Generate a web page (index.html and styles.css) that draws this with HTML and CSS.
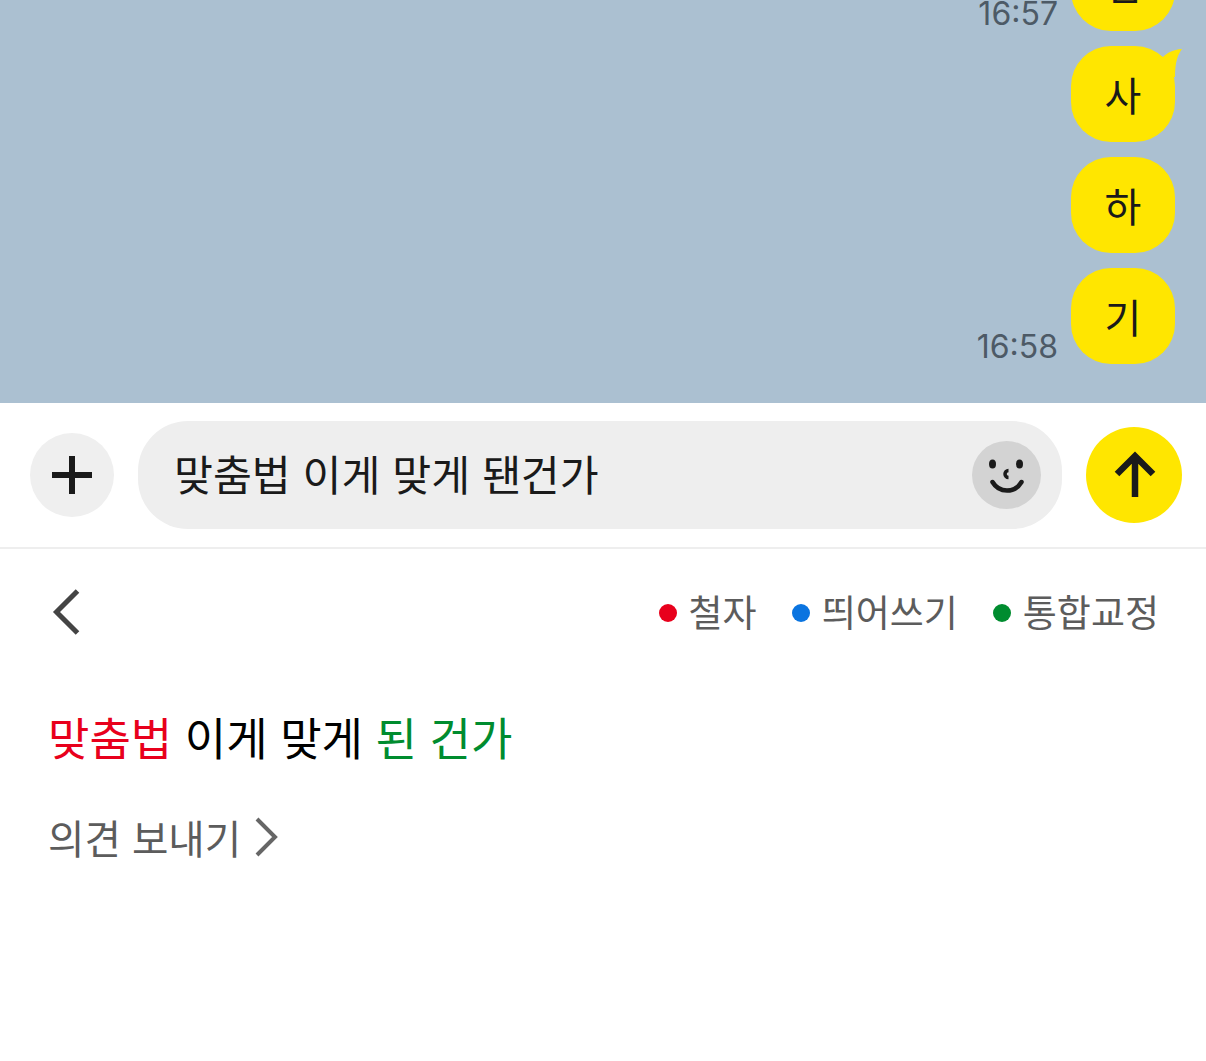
FILE: index.html
```html
<!DOCTYPE html>
<html lang="ko">
<head>
<meta charset="utf-8">
<title>맞춤법</title>
<link rel="stylesheet" href="styles.css">
</head>
<body>
<main class="screen">
  <section class="chat">
    <div class="msg">
      <time class="time">16:57</time>
      <div class="bubble">냄</div>
    </div>
    <div class="msg">
      <div class="bubble tailed">사
        <svg class="tail" width="24" height="36" viewBox="0 0 24 36"><path d="M0 8L5 11C9 7 15 3.500 24 3C20 8 17 16 17 31L0 31Z"/></svg>
      </div>
    </div>
    <div class="msg"><div class="bubble">하</div></div>
    <div class="msg">
      <time class="time">16:58</time>
      <div class="bubble">기</div>
    </div>
  </section>

  <section class="composer">
    <button class="plus" aria-label="추가">
      <svg width="42" height="42" viewBox="0 0 42 42"><path d="M21 2V40M1 21H41" fill="none" stroke="#1a1a1a" stroke-width="6"/></svg>
    </button>
    <div class="field">
      <span class="field-text">맞춤법 이게 맞게 됀건가</span>
      <span class="emoji">
        <svg width="40" height="36" viewBox="0 0 40 36"><ellipse cx="5.500" cy="7" rx="3.500" ry="4.500" fill="#1a1a1a"/><ellipse cx="32.500" cy="7" rx="3.500" ry="4.500" fill="#1a1a1a"/><path d="M21.500 13.500a3.500 3.500 0 1 0 0 7" fill="none" stroke="#1a1a1a" stroke-width="3.500"/><path d="M5.500 25C9 31 14 33.500 20 33.500S31 31 34.500 25" fill="none" stroke="#1a1a1a" stroke-width="4.500" stroke-linecap="round"/></svg>
      </span>
    </div>
    <button class="send" aria-label="보내기">
      <svg width="44" height="48" viewBox="0 0 44 48"><path d="M23 46V5M5 23L23 5L41 23" fill="none" stroke="#1a1a1a" stroke-width="6.500"/></svg>
    </button>
  </section>

  <section class="panel">
    <header class="panel-head">
      <svg class="back" width="30" height="48" viewBox="0 0 30 48"><path d="M25.500 3L4.500 24L25.500 45" fill="none" stroke="#444" stroke-width="5"/></svg>
      <ul class="legend">
        <li class="legend-item"><i class="dot red"></i>철자</li>
        <li class="legend-item"><i class="dot blue"></i>띄어쓰기</li>
        <li class="legend-item"><i class="dot green"></i>통합교정</li>
      </ul>
    </header>
    <p class="result"><span class="red-text">맞춤법</span> 이게 맞게 <span class="green-text">된 건가</span></p>
    <a class="feedback">의견 보내기
      <svg width="24" height="40" viewBox="0 0 24 40"><path d="M2 2L20 20L2 38" fill="none" stroke="#666" stroke-width="4"/></svg>
    </a>
  </section>
</main>
</body>
</html>
```

FILE: styles.css
```css
* { box-sizing: border-box; }
html, body { margin: 0; padding: 0; background: #fff; }
body { font-family: "Noto Sans CJK KR", "Noto Sans", sans-serif; }
.screen { width: 1206px; height: 1061px; overflow: hidden; display: flex; flex-direction: column; }

.chat {
  height: 403px; flex: none; background: #abc0d1; overflow: hidden;
  display: flex; flex-direction: column; justify-content: flex-end; gap: 15px;
  padding: 0 31px 39px 0;
}
.msg { display: flex; justify-content: flex-end; align-items: flex-end; gap: 13px; }
.time { font-family: Inter, Roboto, sans-serif; font-size: 32px; line-height: 36px; color: #4d5a66; margin-bottom: -1px; }
.bubble {
  position: relative; width: 104px; height: 96px; border-radius: 40px;
  background: #ffe600; color: #1a1a1a;
  display: flex; align-items: center; justify-content: center;
  font-size: 40px; line-height: 1;
}
.tail { position: absolute; top: 0; right: -7px; fill: #ffe600; }

.composer {
  height: 146px; flex: none; display: flex; align-items: center;
  padding: 0 24px 0 30px; border-bottom: 2px solid #eee;
}
.plus, .send { border: 0; padding: 0; border-radius: 50%; display: flex; align-items: center; justify-content: center; flex: none; }
.plus { width: 84px; height: 84px; background: #efefef; }
.send { width: 96px; height: 96px; background: #ffe600; margin-left: 24px; }
.field {
  width: 924px; height: 108px; margin-left: 24px; border-radius: 50px; background: #eee;
  display: flex; align-items: center; justify-content: space-between; padding: 0 21px 0 36px;
}
.field-text { font-size: 42.3px; line-height: 1; color: #1a1a1a; margin-bottom: 4px; }
.emoji { width: 69px; height: 68px; border-radius: 50%; background: #d3d3d3; display: flex; align-items: center; justify-content: center; }

.panel { flex: 1; padding: 0 47px 0 48px; }
.panel-head { display: flex; align-items: center; justify-content: space-between; margin-top: 39px; height: 48px; }
.back { margin-left: 4px; }
.legend { list-style: none; margin: 0 0 2px; padding: 0; display: flex; gap: 35px; }
.legend-item { display: flex; align-items: center; font-size: 37px; line-height: 48px; color: #5c5c5c; }
.dot { width: 18px; height: 18px; border-radius: 50%; margin-right: 12px; margin-top: 4px; }
.red { background: #e8001c; }
.blue { background: #0a74e0; }
.green { background: #008c2f; }
.result { margin: 71px 0 0; font-size: 45px; line-height: 60px; color: #000; }
.red-text { color: #e8001c; }
.green-text { color: #008c2f; }
.feedback { display: flex; align-items: center; gap: 14px; margin-top: 46px; font-size: 39.6px; line-height: 48px; color: #5c5c5c; }
```
